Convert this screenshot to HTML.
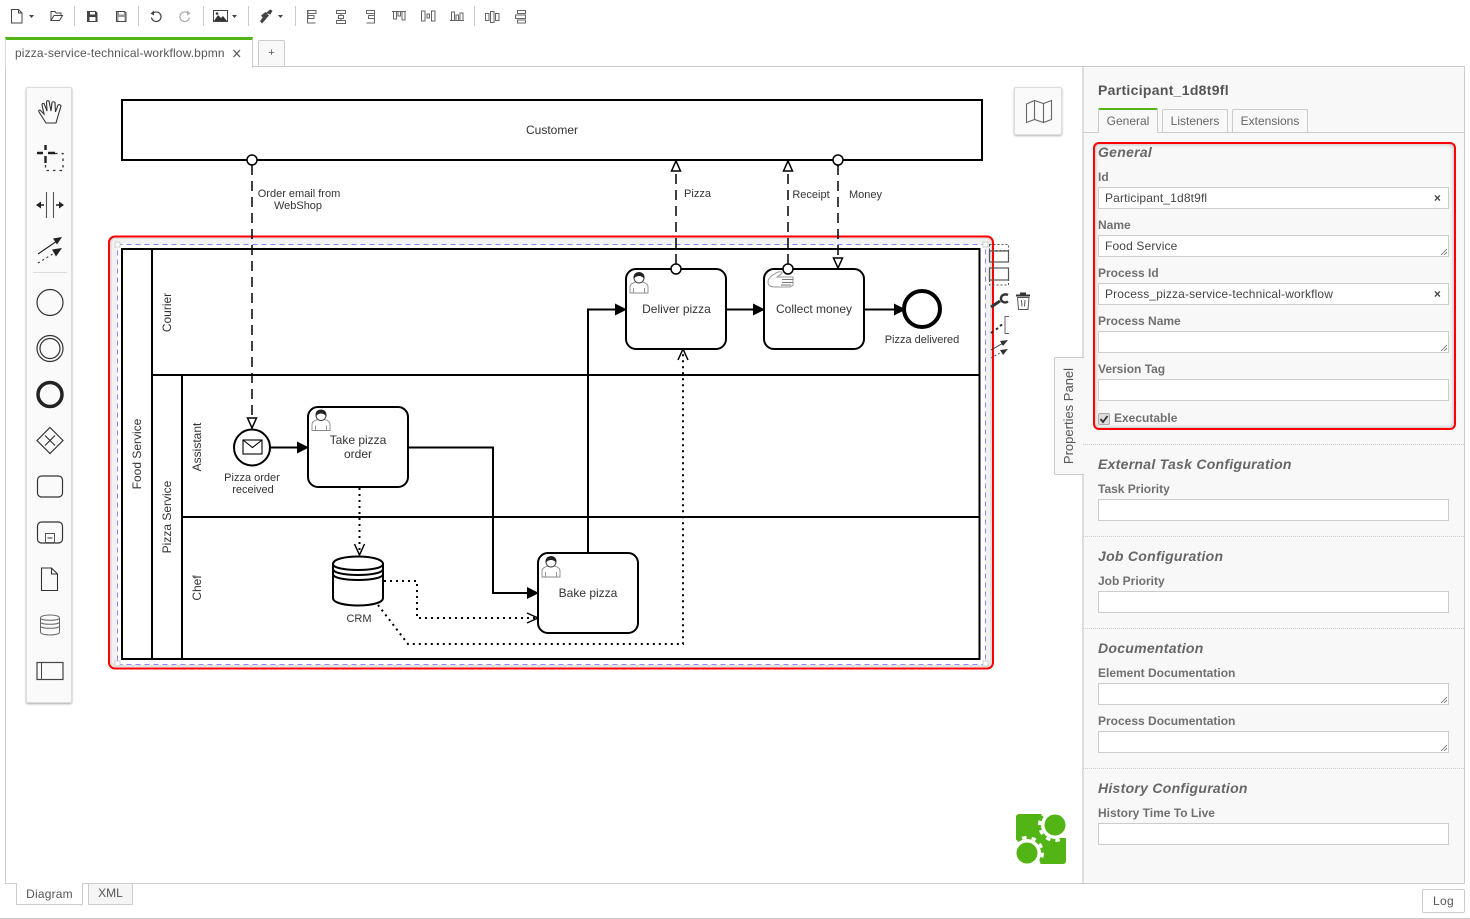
<!DOCTYPE html>
<html><head><meta charset="utf-8"><title>Camunda Modeler</title>
<style>
html,body{margin:0;padding:0;background:#fff}
body{width:1470px;height:919px;position:relative;overflow:hidden;font-family:"Liberation Sans",Arial,sans-serif;color:#444}
.a{position:absolute;box-sizing:border-box}
.lab{position:absolute;left:1098px;font-size:12px;font-weight:bold;color:#707070;line-height:14px;white-space:nowrap}
.h{position:absolute;left:1098px;font-size:14px;font-weight:bold;font-style:italic;color:#666;line-height:16px;letter-spacing:.28px;white-space:nowrap}
.inp{position:absolute;left:1098px;width:351px;height:22px;background:#fff;border:1px solid #ccc;box-sizing:border-box;font-size:12px;line-height:20px;padding-left:6px;color:#444;white-space:nowrap;letter-spacing:.15px}
.sep{position:absolute;left:1083px;width:381px;border-top:1px dotted #ccc;height:0}
svg text{font-family:"Liberation Sans",Arial,sans-serif}
</style></head><body>

<!-- frame -->
<div class="a" style="left:5px;top:66px;width:1460px;height:818px;border:1px solid #ccc;background:#fff"></div>
<div class="a" style="left:1082px;top:67px;width:382px;height:816px;background:#f8f8f8;border-left:2px solid #ddd"></div>
<div class="a" style="left:0;top:918px;width:1470px;height:1px;background:#ccc"></div>

<!-- file tabs -->
<div class="a" style="left:5px;top:37px;width:248px;height:31px;background:#fff;border-top:3px solid #52b415;border-left:1px solid #ddd;border-right:1px solid #ccc;font-size:12px;line-height:27px;padding-left:9px;color:#555;white-space:nowrap;letter-spacing:.135px">pizza-service-technical-workflow.bpmn</div>
<div class="a" style="left:258px;top:40px;width:27px;height:26px;background:#f8f8f8;border:1px solid #ccc;border-bottom:0;border-radius:2px 2px 0 0;font-size:11px;line-height:25px;text-align:center;color:#555">+</div>

<!-- bottom tabs -->
<div class="a" style="left:16px;top:883px;width:67px;height:22px;background:#fff;border:1px solid #ccc;border-top:0;font-size:12px;line-height:22px;text-align:center;color:#555;letter-spacing:.2px">Diagram</div>
<div class="a" style="left:88px;top:884px;width:45px;height:21px;background:#f5f5f5;border:1px solid #ccc;border-top:0;font-size:12px;line-height:19px;text-align:center;color:#555">XML</div>
<div class="a" style="left:1422px;top:889px;width:43px;height:24px;background:#fff;border:1px solid #ccc;border-radius:2px;font-size:12px;line-height:23px;text-align:center;color:#555;letter-spacing:.3px">Log</div>

<!-- palette -->
<div class="a" style="left:26px;top:87px;width:46px;height:616px;background:#fafafa;border:1px solid #ddd;border-radius:2px;box-shadow:0 1px 2px rgba(0,0,0,.35)"></div>
<!-- map button -->
<div class="a" style="left:1014px;top:87px;width:48px;height:48px;background:#fafafa;border:1px solid #ddd;border-radius:2px;box-shadow:0 1px 2px rgba(0,0,0,.3)"></div>
<!-- properties toggle -->
<div class="a" style="left:1054px;top:357px;width:30px;height:118px;background:#f8f8f8;border:1px solid #ccc;border-right:0;border-radius:2px 0 0 2px"></div>
<div class="a" style="left:1010px;top:408px;width:118px;height:16px;font-size:13px;line-height:16px;text-align:center;color:#555;transform:rotate(-90deg);white-space:nowrap">Properties Panel</div>

<svg class="a" style="left:0;top:0" width="1470" height="919" viewBox="0 0 1470 919" xmlns="http://www.w3.org/2000/svg">
<defs>
<g id="user" fill="#fff" stroke="#8a8a8a" stroke-width=".9">
 <path d="M.5 21v-6c0-3 3-4 5.500-5l7 0c3 1 5.500 2 5.500 5v6z"/>
 <path d="M4 21v-5M15 21v-5" fill="none"/>
 <circle cx="9.500" cy="6" r="5" stroke="#333"/>
 <path d="M4.500 6c-.2-4 2.500-5.500 5-5.500s5.200 1.500 5 5.500c-1.500-2-3-2.500-5-2.500s-3.500 .5-5 2.500z" fill="#222" stroke="#222"/>
</g>
<marker id="b" viewBox="0 0 12 12" refX="11" refY="6" markerWidth="12" markerHeight="12" markerUnits="userSpaceOnUse" orient="auto"><path d="M0 0L12 6L0 12z" fill="#000"/></marker>
</defs>

<!-- toolbar -->
<g fill="none" stroke="#444" stroke-width="1">
 <path d="M11.500 9.500h7l3.500 3.500v10h-10.500zM18.500 9.500v3.500h3.500"/>
 <path d="M51 20.500v-9h4l1 1.500h5v2M51 20.500l3-5h8.500l-3 5z"/>
 <path d="M87.500 11.500h8l1.500 1.500v8.500h-9.500z" fill="#444"/>
 <path d="M89.500 17h6v4h-6z" fill="#fff" stroke="none"/><path d="M90 12h5v2.500h-5z" fill="#fff" stroke="none"/>
 <path d="M116.500 11.500h8l1.500 1.500v8.500h-9.500z" fill="#999" stroke="#444"/>
 <path d="M118.500 17h6v4h-6z" fill="#fff" stroke="none"/><path d="M119 12h5v2.500h-5z" fill="#fff" stroke="none"/>
 <path d="M154 12.500a4.800 4.800 0 1 1-2.500 5" stroke-width="1.200"/>
 <path d="M150.500 13.500l3.500-3v5z" fill="#444" stroke="none"/>
 <path d="M187 12.500a4.800 4.800 0 1 0 2.500 5" stroke="#aaa" stroke-width="1.200"/>
 <path d="M190.500 13.500l-3.500-3v5z" fill="#aaa" stroke="none"/>
 <rect x="213.500" y="10.500" width="14" height="11" fill="#fff"/>
 <path d="M214 21l4-6 3 3 2-2 4 5z" fill="#333" stroke="none"/><circle cx="217" cy="13.500" r="1.300" fill="#333" stroke="none"/>
</g>
<g fill="#444">
 <path d="M29 15h5l-2.500 3zM232 15h5l-2.500 3zM278 15h5l-2.500 3z"/>
 <path d="M261 15.500l4.500-3.500 3.500 3.500-4 4.500zM260 21l3.500-4.500 2.500 2.500-4 4.500zM266 13l4-3.500 2.500 1-2 4z"/>
</g>
<g stroke="#ccc"><path d="M74.500 6v20M138.500 6v20M203.500 6v20M248.500 6v20M295.500 6v20M474.500 6v20"/></g>
<g fill="none" stroke="#666" stroke-width="1">
 <path d="M307.500 10v13h8M308 10.500h8v3h-8zM308 15.500h6v3h-6z"/>
 <path d="M336.500 10.500h9v3h-9zM338.500 15.500h5v3h-5zM336.500 20.500h9v3h-9zM341 13.500v2M341 18.500v2"/>
 <path d="M374.500 10v13h-8M366.500 10.500h8v3h-8zM368.500 15.500h6v3h-6z"/>
 <path d="M392 11.500h14M393.500 12v7h3v-7M398 12v4h2.500v-4M402 12v8h3v-8"/>
 <path d="M421.500 11h3.500v10h-3.500zM427 14h2.500v4h-2.500zM431.500 11h3.500v10h-3.500z"/>
 <path d="M450 20.500h14M451.500 20v-8h3v8M456 20v-5h2.500v5M460 20v-7h3v7"/>
 <path d="M485.500 13.500h3.500v7h-3.500zM490.500 11.500h3.500v11h-3.500zM495.500 13.500h3.500v7h-3.500z"/>
 <path d="M517.500 10.500h8v3h-8zM515.500 15h10v3.500h-10zM517.500 20h8v3h-8z"/>
</g>

<!-- palette icons -->
<g fill="none" stroke="#333" stroke-width="1.100">
 <path d="M46 123L39 112Q38 110 40 110L44 114L42 105Q42 103 44 103.500L47 111L46.500 102Q47 100 49 101L51 111L52 102.500Q53 101 55 102.500L55.500 112L58 105Q60 104 61 106L58 116L56 123Z"/>
 <path d="M55 153.500h8v17h-17.500v-7" stroke-width="1.300" stroke-dasharray="2.500 4"/>
 <path d="M37 153h6M48 153h7M45.500 145v5M45.500 156v7" stroke="#222" stroke-width="2.400"/>
 <path d="M46.500 192v26M53.500 192v26" stroke="#555"/>
 <path d="M37 205h7M56 205h7" stroke="#222" stroke-width="1.500"/>
 <path d="M36 205l5-3.500v7zM64 205l-5-3.500v7z" fill="#222" stroke="none"/>
 <path d="M38 254l19-13" stroke="#222"/><path d="M62 237l-9 1.500 4 6z" fill="#222" stroke="none"/>
 <path d="M38 263l18-11" stroke="#333" stroke-dasharray="2 3"/><path d="M62 248l-10 1.500 4 7z" fill="#222" stroke="none"/>
</g>
<path d="M33 272.500h34" stroke="#ddd"/>
<g fill="none" stroke="#333">
 <circle cx="50" cy="302.500" r="13" stroke-width="1.200"/>
 <circle cx="50" cy="348.500" r="13" stroke-width="1.200"/><circle cx="50" cy="348.500" r="10" stroke-width="1.200"/>
 <circle cx="50" cy="394.500" r="12" stroke="#222" stroke-width="3.500"/>
 <path d="M50 427.500l13 13-13 13-13-13z" stroke-width="1.200"/><path d="M45 435.500l10 10M55 435.500l-10 10" stroke-width="1.200"/>
 <rect x="37.500" y="476" width="25" height="21" rx="4" stroke-width="1.200"/>
 <rect x="37.500" y="522" width="25" height="21" rx="4" stroke-width="1.200"/>
 <rect x="45.500" y="533.500" width="9" height="9" stroke="#555"/><path d="M47.500 538h5" stroke="#333"/>
 <path d="M41.500 568h10l6 6v16.500h-16zM51.500 568v6h6" stroke-width="1.100"/>
 <path d="M40.500 618c0-4 19-4 19 0v14c0 4-19 4-19 0z" stroke="#666"/><path d="M40.500 618c0 3 19 3 19 0M40.500 622c0 3 19 3 19 0M40.500 626c0 3 19 3 19 0" stroke="#666"/>
 <rect x="37" y="662.500" width="26" height="17" stroke="#444" stroke-width="1.200"/><path d="M41.500 662.500v17" stroke="#444"/>
</g>

<!-- map -->
<path d="M1026.500 104l8-3.500 9 3 8-3v19l-8 3-9-3-8 3zM1034.500 100.500v19M1043.500 103.500v19" fill="none" stroke="#666" stroke-width="1.100"/>

<!-- customer -->
<rect x="122" y="100" width="860" height="60" fill="#fff" stroke="#000" stroke-width="2"/>
<text x="552" y="134" font-size="12" fill="#333" text-anchor="middle">Customer</text>

<!-- highlight -->
<rect x="110" y="237" width="882" height="430" rx="5" fill="#f2f2f2"/>
<rect x="111" y="238" width="880" height="428" rx="5" fill="none" stroke="#e2e2e2" stroke-width="2"/>
<rect x="117.500" y="244.500" width="868" height="420" fill="#fff" stroke="#8888ff" stroke-dasharray="5 4"/>
<rect x="109" y="236.500" width="884" height="432" rx="6" fill="none" stroke="#f00" stroke-width="2"/>
<g fill="#fff" stroke="#ccc"><rect x="115" y="242" width="5" height="5"/><rect x="983" y="242" width="5" height="5"/><rect x="115" y="661" width="5" height="5"/><rect x="983" y="661" width="5" height="5"/></g>

<!-- pool -->
<rect x="122" y="249" width="857.500" height="410" fill="#fff" stroke="#000" stroke-width="2"/>
<path d="M152 249v410M152 375h827M182 375v284M182 517h797" stroke="#000" stroke-width="2" fill="none"/>
<g font-size="12" fill="#333" text-anchor="middle">
 <text transform="translate(141 454) rotate(-90)">Food Service</text>
 <text transform="translate(171 312.500) rotate(-90)">Courier</text>
 <text transform="translate(171 517) rotate(-90)">Pizza Service</text>
 <text transform="translate(201 447) rotate(-90)">Assistant</text>
 <text transform="translate(201 588) rotate(-90)">Chef</text>
</g>

<!-- message flows -->
<g fill="none" stroke="#000" stroke-width="1.500" stroke-dasharray="10 6">
 <path d="M252 165v252"/><path d="M676 264V172"/><path d="M788 264V172"/><path d="M838 165v93"/>
</g>
<g fill="#fff" stroke="#000" stroke-width="1.500">
 <path d="M247.500 418h9l-4.500 10z"/><path d="M671.500 171h9l-4.500-10z"/><path d="M783.500 171h9l-4.500-10z"/><path d="M833.500 258h9l-4.500 10z"/>
</g>

<!-- sequence flows -->
<g fill="none" stroke="#000" stroke-width="2">
 <path d="M270 447.500h38" marker-end="url(#b)"/>
 <path d="M408 447.500h85v145.500h45" marker-end="url(#b)"/>
 <path d="M588 553V309.500h38" marker-end="url(#b)"/>
 <path d="M726 309.500h38" marker-end="url(#b)"/>
 <path d="M864 309.500h41" marker-end="url(#b)"/>
</g>

<!-- data associations -->
<g fill="none" stroke="#000" stroke-width="2" stroke-dasharray="2 4">
 <path d="M359.500 488v66"/>
 <path d="M384 581h33v37h120"/>
 <path d="M378 605l30 39h275V351"/>
</g>
<g fill="none" stroke="#000" stroke-width="1.500">
 <path d="M354.500 544l5 11 5-11"/>
 <path d="M527 613l11 5-11 5"/>
 <path d="M678 360l5-11 5 11"/>
</g>

<!-- tasks -->
<g fill="#fff" stroke="#000" stroke-width="2">
 <rect x="626" y="269" width="100" height="80" rx="10"/>
 <rect x="764" y="269" width="100" height="80" rx="10"/>
 <rect x="308" y="407" width="100" height="80" rx="10"/>
 <rect x="538" y="553" width="100" height="80" rx="10"/>
 <circle cx="252" cy="447.500" r="18"/>
</g>
<circle cx="922" cy="309" r="18" fill="#fff" stroke="#000" stroke-width="4"/>
<use href="#user" x="629.500" y="272"/>
<use href="#user" x="311.500" y="409.500"/>
<use href="#user" x="541.500" y="556"/>
<g fill="none" stroke="#999" stroke-width="1">
 <path d="M768 282c0-3 2-5 4-6.500l5-3c2-1 5-1 5 .5 0 1-2 2-5 4h16v8.500l-3 1.500h-14c-5 0-8-1-8-5z" fill="#fff"/>
 <path d="M782 279.500h11M782 282.500h11M781 285h10" stroke="#777"/>
</g>
<rect x="243" y="440" width="19" height="14" fill="#fff" stroke="#000" stroke-width="1.100"/>
<path d="M243 440l9.500 7.500 9.500-7.500" fill="none" stroke="#000" stroke-width="1.100"/>
<circle cx="252" cy="160" r="5" fill="#fff" stroke="#000" stroke-width="1.500"/>
<circle cx="676" cy="269" r="5" fill="#fff" stroke="#000" stroke-width="1.500"/>
<circle cx="788" cy="269" r="5" fill="#fff" stroke="#000" stroke-width="1.500"/>
<circle cx="838" cy="160" r="5" fill="#fff" stroke="#000" stroke-width="1.500"/>

<!-- data store -->
<g fill="#fff" stroke="#000" stroke-width="2">
 <path d="M333 564c0-10 50-10 50 0v34c0 10-50 10-50 0z"/>
 <path d="M333 564c0 8 50 8 50 0" fill="none"/><path d="M333 569c0 8 50 8 50 0" fill="none"/><path d="M333 574c0 8 50 8 50 0" fill="none"/>
</g>

<!-- labels -->
<g font-size="12" fill="#333" text-anchor="middle">
 <text x="676.500" y="313">Deliver pizza</text>
 <text x="814" y="313">Collect money</text>
 <text x="358" y="444">Take pizza</text><text x="358" y="458">order</text>
 <text x="588" y="597">Bake pizza</text>
</g>
<g font-size="11" fill="#333" text-anchor="middle">
 <text x="922" y="343">Pizza delivered</text>
 <text x="252" y="481">Pizza order</text><text x="253" y="493">received</text>
 <text x="359" y="622">CRM</text>
 <text x="299" y="197">Order email from</text><text x="298" y="209">WebShop</text>
 <text x="697.500" y="197">Pizza</text>
 <text x="811" y="198">Receipt</text>
 <text x="865.500" y="198">Money</text>
</g>

<!-- context pad -->
<g fill="none" stroke="#555">
 <rect x="989.500" y="244.500" width="19" height="6" stroke-dasharray="2 2"/>
 <rect x="989.500" y="251" width="19" height="11" stroke-width="1.200"/>
 <rect x="989.500" y="268" width="19" height="12" stroke-width="1.200"/>
 <path d="M989.500 280v5h19v-5" stroke-dasharray="2 2"/>
 <path d="M991 307l9-6" stroke="#333" stroke-width="3"/>
 <path d="M1008 295c-3-1.500-7 0-7 3.500s4 5 7 3" stroke="#333" stroke-width="2.400"/>
 <path d="M991 333l2-1.500M996 329.500l2-1.500M1000 326l2-1.500" stroke="#222" stroke-width="2"/>
 <path d="M1009 316.500h-4v17h4" stroke="#666"/>
 <path d="M991 350l14-8" stroke="#333"/><path d="M1008 340l-8 1 3 5z" fill="#333" stroke="none"/>
 <path d="M991 358l14-8" stroke="#555" stroke-dasharray="2 2"/><path d="M1008 349l-8 1 3 5z" fill="#333" stroke="none"/>
 <path d="M1017.500 297.500l1 12h9.500l1-12z" stroke="#555"/>
 <path d="M1021.500 300l.5 6.500M1025 300l-.5 6.500" stroke="#555"/>
 <path d="M1016 295.500h14" stroke="#333" stroke-width="2"/><path d="M1020 293.500h6" stroke="#333" stroke-width="2"/>
</g>

<!-- logo -->
<rect x="1016" y="814" width="50" height="50" rx="3" fill="#52b415"/>
<path d="M1044 814h22v24h-5l-17-8z" fill="#fff"/>
<path d="M1016 842h8l14 6 2 16h-24z" fill="#fff"/>
<circle cx="1055" cy="825" r="14" fill="#fff"/>
<circle cx="1055" cy="825" r="15.500" fill="none" stroke="#fff" stroke-width="3" stroke-dasharray="4.500 5.200"/>
<circle cx="1027" cy="853" r="14" fill="#fff"/>
<circle cx="1027" cy="853" r="15.500" fill="none" stroke="#fff" stroke-width="3" stroke-dasharray="4.500 5.200"/>
<circle cx="1055" cy="825" r="10.500" fill="#52b415"/>
<circle cx="1027" cy="853" r="10.500" fill="#52b415"/>

<!-- close x on tab -->
<path d="M233.500 50l6.500 7M240 50l-6.500 7" stroke="#555" stroke-width="1.200" fill="none"/>
</svg>

<!-- properties panel -->
<div class="a" style="left:1098px;top:81px;font-size:14px;font-weight:bold;color:#555;line-height:18px;letter-spacing:.3px;white-space:nowrap">Participant_1d8t9fl</div>
<div class="a" style="left:1083px;top:132px;width:381px;height:1px;background:#ccc"></div>
<div class="a" style="left:1098px;top:108px;width:60px;height:25px;background:#f8f8f8;border:1px solid #ccc;border-top:2px solid #52b415;border-bottom:0;border-radius:2px 2px 0 0;font-size:12px;line-height:23px;text-align:center;color:#666">General</div>
<div class="a" style="left:1162px;top:109px;width:66px;height:23px;border:1px solid #ccc;border-bottom:0;border-radius:2px 2px 0 0;font-size:12px;line-height:23px;text-align:center;color:#666">Listeners</div>
<div class="a" style="left:1232px;top:109px;width:76px;height:23px;border:1px solid #ccc;border-bottom:0;border-radius:2px 2px 0 0;font-size:12px;line-height:23px;text-align:center;color:#666">Extensions</div>

<div class="a" style="left:1093px;top:142px;width:363px;height:288px;border:2px solid #f00;border-radius:6px;box-shadow:inset 0 0 5px rgba(0,0,0,.3)"></div>

<div class="h" style="top:144px">General</div>
<div class="lab" style="top:170px">Id</div>
<div class="inp" style="top:187px">Participant_1d8t9fl<span style="position:absolute;right:7px;top:0;font-weight:bold;font-size:12px">×</span></div>
<div class="lab" style="top:218px">Name</div>
<div class="inp" style="top:235px">Food Service</div>
<div class="lab" style="top:266px">Process Id</div>
<div class="inp" style="top:283px">Process_pizza-service-technical-workflow<span style="position:absolute;right:7px;top:0;font-weight:bold;font-size:12px">×</span></div>
<div class="lab" style="top:314px">Process Name</div>
<div class="inp" style="top:331px"></div>
<div class="lab" style="top:362px">Version Tag</div>
<div class="inp" style="top:379px"></div>
<div class="a" style="left:1098px;top:413px;width:12px;height:12px;background:#ddd;border:1px solid #aaa;border-radius:2px"></div>
<svg class="a" style="left:1098px;top:413px" width="12" height="12"><path d="M2.500 6l2.500 3 4.500-6" fill="none" stroke="#333" stroke-width="1.800"/></svg>
<div class="lab" style="left:1114px;top:411px">Executable</div>
<svg class="a" style="left:1098px;top:235px" width="351" height="120"><path d="M343 20l6-6M346 20l3-3M343 116l6-6M346 116l3-3" stroke="#666" stroke-width=".8" fill="none"/></svg>

<div class="sep" style="top:444px"></div>
<div class="h" style="top:456px">External Task Configuration</div>
<div class="lab" style="top:482px">Task Priority</div>
<div class="inp" style="top:499px"></div>
<div class="sep" style="top:536px"></div>
<div class="h" style="top:548px">Job Configuration</div>
<div class="lab" style="top:574px">Job Priority</div>
<div class="inp" style="top:591px"></div>
<div class="sep" style="top:628px"></div>
<div class="h" style="top:640px">Documentation</div>
<div class="lab" style="top:666px">Element Documentation</div>
<div class="inp" style="top:683px"></div>
<div class="lab" style="top:714px">Process Documentation</div>
<div class="inp" style="top:731px"></div>
<svg class="a" style="left:1098px;top:683px" width="351" height="70"><path d="M343 20l6-6M346 20l3-3M343 68l6-6M346 68l3-3" stroke="#666" stroke-width=".8" fill="none"/></svg>
<div class="sep" style="top:768px"></div>
<div class="h" style="top:780px">History Configuration</div>
<div class="lab" style="top:806px">History Time To Live</div>
<div class="inp" style="top:823px"></div>
</body></html>
